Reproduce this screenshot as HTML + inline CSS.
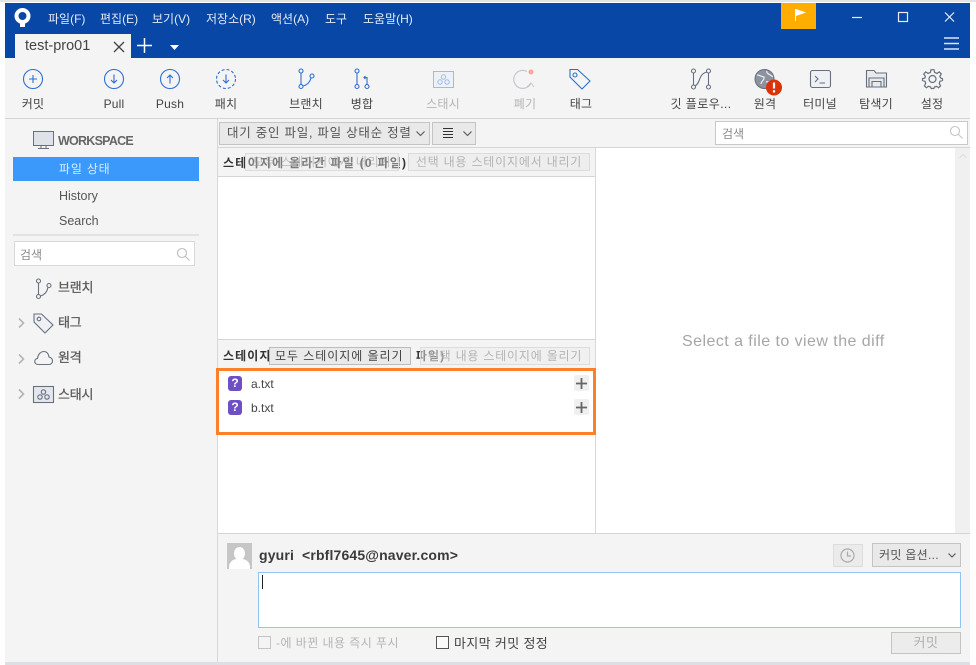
<!DOCTYPE html>
<html><head><meta charset="utf-8">
<style>
html,body{margin:0;padding:0;background:#fff;}
body{width:976px;height:665px;overflow:hidden;position:relative;font-family:"Liberation Sans","Noto Sans CJK KR",sans-serif;font-size:12px;color:#333;}
.a{position:absolute;white-space:nowrap;}
.m{color:#e4ebf6;font-size:12px;top:10px;}
.tl{top:97px;font-size:12px;line-height:14px;color:#444;transform:translateX(-50%);letter-spacing:.2px;}
.d{color:#b5b5b5;}
svg{position:absolute;overflow:visible;fill:none;}
.btn{background:#e9e9e9;border:1px solid #c4c4c4;box-sizing:border-box;}
.dbtn{background:#eee;border:1px solid #dcdcdc;box-sizing:border-box;color:#b4b4b4;font-size:12px;line-height:16px;text-align:center;letter-spacing:.8px;}
.side{font-size:13px;color:#5c5c5c;letter-spacing:-.2px;-webkit-text-stroke:.3px #5c5c5c;}
</style></head><body>
<!-- window -->
<div class="a" style="left:0;top:0;width:976px;height:2px;background:#e4e4e4"></div>
<div class="a" style="left:5px;top:3px;width:965px;height:659px;background:#f4f4f4"></div>
<div class="a" style="left:5px;top:3px;width:965px;height:55px;background:#0847a6"></div>
<div class="a" style="left:5px;top:662px;width:965px;height:3px;background:#dcdfe6"></div>

<!-- logo -->
<svg style="left:14px;top:8px" width="18" height="20"><circle cx="8.500" cy="8" r="6" stroke="#fff" stroke-width="4"/><path d="M6 13 L6 19 L11 19 L11 13Z" fill="#fff"/></svg>

<div class="a m" style="left:48px">파일(F)</div>
<div class="a m" style="left:100px">편집(E)</div>
<div class="a m" style="left:152px">보기(V)</div>
<div class="a m" style="left:206px">저장소(R)</div>
<div class="a m" style="left:271px">액션(A)</div>
<div class="a m" style="left:325px">도구</div>
<div class="a m" style="left:363px">도움말(H)</div>

<!-- tab -->
<div class="a" style="left:15px;top:34px;width:116px;height:24px;background:#f4f4f4"></div>
<div class="a" style="left:25px;top:36px;font-size:14.500px;color:#444;line-height:20px">test-pro01</div>
<svg style="left:113px;top:41px" width="12" height="12" stroke="#444" stroke-width="1.300"><path d="M1 1L11 11M11 1L1 11"/></svg>
<svg style="left:137px;top:38px" width="16" height="16" stroke="#fff" stroke-width="1.500"><path d="M7.500 0V15M0 7.500H15"/></svg>
<svg style="left:170px;top:45px" width="9" height="5"><path d="M0 0H9L4.500 5Z" fill="#fff"/></svg>

<!-- flag, window buttons -->
<div class="a" style="left:781px;top:3px;width:35px;height:26px;background:#ffae00"></div>
<svg style="left:795px;top:8px" width="12" height="14"><path d="M.5 1V13" stroke="#fff"/><path d="M1 1L11 4.500L1 8Z" fill="#fff"/></svg>
<svg style="left:852px;top:12px" width="100" height="14" stroke="#e6edf8" stroke-width="1.200"><path d="M0 5.500H10"/><rect x="46.500" y=".5" width="9" height="9"/><path d="M93 .5L102 9.500M102 .5L93 9.500"/></svg>
<svg style="left:944px;top:37px" width="16" height="13" stroke="#dbe5f5" stroke-width="1.400"><path d="M0 1H15M0 6.500H15M0 12H15"/></svg>

<!-- toolbar icons -->
<svg style="left:23px;top:69px" width="20" height="20" stroke="#2c6fd0" stroke-width="1.100"><circle cx="10" cy="10" r="9.500"/><path d="M6 10H14M10 6V14"/></svg>
<div class="a tl" style="left:33px">커밋</div>
<svg style="left:104px;top:69px" width="20" height="20" stroke="#2c6fd0" stroke-width="1.100"><circle cx="10" cy="10" r="9.500"/><path d="M10 5.500V14M7 11L10 14L13 11"/></svg>
<div class="a tl" style="left:114px">Pull</div>
<svg style="left:160px;top:69px" width="20" height="20" stroke="#2c6fd0" stroke-width="1.100"><circle cx="10" cy="10" r="9.500"/><path d="M10 14.500V6M7 9L10 6L13 9"/></svg>
<div class="a tl" style="left:170px">Push</div>
<svg style="left:216px;top:69px" width="20" height="20" stroke="#2c6fd0" stroke-width="1.100"><circle cx="10" cy="10" r="9.500" stroke-dasharray="3 2"/><path d="M10 5.500V14M7 11L10 14L13 11"/></svg>
<div class="a tl" style="left:226px">패치</div>
<svg style="left:297px;top:68px" width="20" height="22" stroke="#2c6fd0" stroke-width="1.100"><circle cx="4" cy="3" r="2"/><circle cx="4" cy="18.500" r="2"/><circle cx="15" cy="8" r="2"/><path d="M4 5V16.500M6 18C10 17 13 14 14 10"/></svg>
<div class="a tl" style="left:306px">브랜치</div>
<svg style="left:353px;top:68px" width="20" height="22" stroke="#2c6fd0" stroke-width="1.100"><circle cx="4" cy="3" r="2"/><circle cx="4" cy="18.500" r="2"/><circle cx="14" cy="18.500" r="2"/><path d="M4 5V16.500M14 16.500V9.500H11M12.500 8L11 9.500L12.500 11"/></svg>
<div class="a tl" style="left:362px">병합</div>
<svg style="left:433px;top:71px" width="21" height="17" stroke="#9cbbe6" stroke-width="1"><rect x=".5" y=".5" width="20" height="16" fill="#eef2f8"/><circle cx="10.500" cy="6" r="2.200"/><circle cx="7" cy="11" r="2.200"/><circle cx="14" cy="11" r="2.200"/></svg>
<div class="a tl d" style="left:443px">스태시</div>
<svg style="left:513px;top:68px" width="22" height="23" stroke="#c4c8ce" stroke-width="1.200"><path d="M14 3.500A9 9 0 1 0 18 15"/><path d="M14 19L18 15L21 19" stroke-width="1"/><circle cx="18" cy="4" r="2.500" fill="#f9a898" stroke="none"/></svg>
<div class="a tl d" style="left:525px">폐기</div>
<svg style="left:569px;top:68px" width="22" height="22" stroke="#2c6fd0" stroke-width="1.100"><path d="M1 1.500H8.500L21 13L13 21L1 9Z"/><circle cx="6" cy="7" r="2"/></svg>
<div class="a tl" style="left:581px">태그</div>
<svg style="left:690px;top:68px" width="22" height="22" stroke="#66707e" stroke-width="1.100"><circle cx="3.500" cy="3" r="2"/><circle cx="3.500" cy="19" r="2"/><circle cx="18.500" cy="3" r="2"/><circle cx="18.500" cy="19" r="2"/><path d="M3.500 5V17M18.500 5V17M5 18C11 15 8 6 17 4"/></svg>
<div class="a tl" style="left:701px;letter-spacing:.45px">깃 플로우...</div>
<svg style="left:754px;top:69px" width="28" height="27"><circle cx="10.500" cy="10" r="9.500" fill="#8a939e" stroke="#66707e"/><path d="M3 6C6 6 8 8 10 8C11 11 7 12 7 15M13 2C12 5 16 5 19 8M12 13C15 12 17 14 17 17" stroke="#eee" stroke-width="1.200"/><circle cx="20" cy="18.500" r="8" fill="#dd3208"/><path d="M20 13.500V19.500" stroke="#fff" stroke-width="2.200"/><path d="M20 21.200V23.500" stroke="#fff" stroke-width="2.200"/></svg>
<div class="a tl" style="left:765px">원격</div>
<svg style="left:810px;top:70px" width="21" height="19" stroke="#66707e" stroke-width="1.100"><rect x=".5" y=".5" width="20" height="17" rx="2" fill="#eef0f3"/><path d="M5 6L8 9L5 12M9.500 13H15"/></svg>
<div class="a tl" style="left:820px">터미널</div>
<svg style="left:866px;top:70px" width="21" height="18" stroke="#66707e" stroke-width="1.100"><path d="M.5 17V.5H8L10 3H20.500V17Z" fill="#e8eaee"/><path d="M3 17V8H18V17M6 17V11.500H15V17" /></svg>
<div class="a tl" style="left:876px">탐색기</div>
<svg style="left:922px;top:69px" width="21" height="20" stroke="#66707e" stroke-width="1.200"><circle cx="10.500" cy="10" r="3.500"/><path d="M9 .7H12L12.600 3.400L15 4.400L17.300 2.900L19.300 5L17.800 7.300L18.700 9L20.500 9.700V11.500L17.900 12.400L17.300 14.500L18.600 16.900L16.600 18.700L14.400 17.300L12.500 18L11.800 19.500H9.200L8.600 18L6.500 17.300L4.400 18.700L2.400 16.900L3.700 14.500L3 12.400L.5 11.500V9.700L3 9L3.300 7.300L1.700 5L3.700 2.900L6 4.400L8.400 3.400Z"/></svg>
<div class="a tl" style="left:932px">설정</div>

<div class="a" style="left:5px;top:118px;width:965px;height:1px;background:#d5d5d5"></div>

<!-- sidebar -->
<div class="a" style="left:217px;top:119px;width:1px;height:543px;background:#d8d8d8"></div>
<svg style="left:33px;top:131px" width="21" height="19"><rect x=".5" y=".5" width="20" height="14" fill="#dfe3e9" stroke="#66707e"/><path d="M5 17.500H16M8 15V17M13 15V17" stroke="#66707e"/></svg>
<div class="a" style="left:58px;top:134px;font-size:12.500px;color:#666;font-weight:bold;letter-spacing:-.75px">WORKSPACE</div>
<div class="a" style="left:13px;top:157px;width:186px;height:24px;background:#3b99fc"></div>
<div class="a" style="left:59px;top:160px;color:#d8eaff;font-size:12px;letter-spacing:.8px">파일 상태</div>
<div class="a" style="left:59px;top:189px;color:#555;font-size:12.500px">History</div>
<div class="a" style="left:59px;top:214px;color:#555;font-size:12.500px">Search</div>
<div class="a" style="left:13px;top:234px;width:186px;height:2px;background:#e2e2e2"></div>
<div class="a" style="left:14px;top:241px;width:181px;height:25px;background:#fff;border:1px solid #d9d9d9;box-sizing:border-box"></div>
<div class="a" style="left:20px;top:246px;color:#8a8a8a;font-size:12px">검색</div>
<svg style="left:177px;top:248px" width="13" height="13" stroke="#bdbdbd" stroke-width="1.100"><circle cx="5" cy="5" r="4.500"/><path d="M8.500 8.500L12.500 12.500"/></svg>

<svg style="left:35px;top:278px" width="17" height="22" stroke="#66707e" stroke-width="1.100"><circle cx="3.500" cy="3" r="2"/><circle cx="3.500" cy="18.500" r="2"/><circle cx="14" cy="7.500" r="2"/><path d="M3.500 5V16.500M5.500 18C9 17 12 14 13 9.500"/></svg>
<div class="a side" style="left:58px;top:277px">브랜치</div>
<svg style="left:33px;top:313px" width="21" height="21" stroke="#66707e" stroke-width="1.100"><path d="M1 1H8.500L20 12L12 20L1 9Z" fill="#eef0f3"/><circle cx="6" cy="6" r="1.800"/></svg>
<div class="a side" style="left:58px;top:312px">태그</div>
<svg style="left:34px;top:351px" width="19" height="14" stroke="#66707e" stroke-width="1.100"><path d="M4 13.500C1.500 13.500 .5 11.500 .8 10C1 8.500 2.500 7.500 3.500 7.500C4 3 7 .5 10 .5C13 .5 14.500 3 15 6C17 6.500 18.500 8 18.500 10C18.500 12 17 13.500 15 13.500Z"/></svg>
<div class="a side" style="left:58px;top:347px">원격</div>
<svg style="left:33px;top:386px" width="21" height="17" stroke="#66707e" stroke-width="1.100"><rect x=".5" y=".5" width="20" height="16" fill="#e4e7ec"/><circle cx="10.500" cy="6" r="2.200"/><circle cx="7" cy="11" r="2.200"/><circle cx="14" cy="11" r="2.200"/></svg>
<div class="a side" style="left:58px;top:384px">스태시</div>
<svg style="left:18px;top:318px" width="7" height="90" stroke="#b5b5b5" stroke-width="1.600"><path d="M1 .5L5.500 5L1 9.500M1 36.500L5.500 41L1 45.500M1 71.500L5.500 76L1 80.500"/></svg>

<!-- filter bar -->
<div class="a btn" style="left:219px;top:122px;width:211px;height:23px;font-size:12.500px;line-height:21px;padding-left:7px;color:#555;letter-spacing:.75px">대기 중인 파일, 파일 상태순 정렬</div>
<svg style="left:416px;top:131px" width="9" height="5" stroke="#555" stroke-width="1.100"><path d="M.5 .5L4.500 4.500L8.500 .5"/></svg>
<div class="a btn" style="left:432px;top:122px;width:44px;height:23px"></div>
<svg style="left:443px;top:128px" width="10" height="10" stroke="#333"><path d="M0 .5H10M0 3.500H10M0 6.500H10M0 9.500H10"/></svg>
<svg style="left:463px;top:131px" width="9" height="5" stroke="#555" stroke-width="1.100"><path d="M.5 .5L4.500 4.500L8.500 .5"/></svg>
<div class="a" style="left:715px;top:121px;width:253px;height:24px;background:#fff;border:1px solid #c9c9c9;box-sizing:border-box"></div>
<div class="a" style="left:722px;top:125px;color:#8a8a8a;font-size:12px">검색</div>
<svg style="left:950px;top:126px" width="13" height="13" stroke="#c4c4c4" stroke-width="1.100"><circle cx="5" cy="5" r="4.500"/><path d="M8.500 8.500L12.500 12.500"/></svg>
<div class="a" style="left:218px;top:147px;width:752px;height:1px;background:#d5d5d5"></div>

<!-- staged pane -->
<div class="a" style="left:218px;top:148px;width:377px;height:385px;background:#fff"></div>
<div class="a" style="left:218px;top:148px;width:377px;height:28px;background:#f4f4f4;border-bottom:1px solid #d5d5d5;box-sizing:content-box"></div>
<div class="a" style="left:595px;top:148px;width:1px;height:385px;background:#d8d8d8"></div>
<div class="a" style="left:223px;top:154px;font-size:12px;font-weight:bold;color:#333;letter-spacing:1.250px">스테이지에 올라간 파일 (0 파일)</div>
<div class="a dbtn" style="left:245px;top:153px;width:154px;height:18px;background:rgba(236,236,236,.4);color:rgba(150,150,150,.55);">모두 스테이지에서 내리기</div>
<div class="a dbtn" style="left:408px;top:153px;width:182px;height:18px">선택 내용 스테이지에서 내리기</div>

<!-- unstaged pane -->
<div class="a" style="left:218px;top:339px;width:377px;height:29px;background:#f4f4f4;border-top:1px solid #d5d5d5;box-sizing:border-box"></div>
<div class="a" style="left:223px;top:347px;font-size:12px;font-weight:bold;color:#333;letter-spacing:1.100px">스테이지에 올라가지 않은 파일 (2 파일)</div>
<div class="a dbtn" style="left:420px;top:347px;width:170px;height:18px;background:rgba(236,236,236,.5)">선택 내용 스테이지에 올리기</div>
<div class="a btn" style="left:269px;top:347px;width:142px;height:18px;font-size:12px;line-height:16px;padding-left:5px;letter-spacing:.95px;color:#444;background:#eaeaea;border-color:#bcbcbc">모두 스테이지에 올리기</div>

<!-- file list -->
<div class="a" style="left:216px;top:368px;width:380px;height:67px;border:3px solid #fb8128;box-sizing:border-box"></div>
<div class="a" style="left:228px;top:376px;width:14px;height:15px;background:#6e4fc5;border-radius:3px;color:#fff;font-weight:bold;font-size:12px;line-height:15px;text-align:center">?</div>
<div class="a" style="left:251px;top:377px;font-size:12px;color:#444">a.txt</div>
<div class="a" style="left:574px;top:375px;width:15px;height:16px;background:#f0f0f0;border-radius:2px"></div>
<svg style="left:576px;top:378px" width="11" height="11" stroke="#666" stroke-width="1.800"><path d="M5.500 0V11M0 5.500H11"/></svg>
<div class="a" style="left:228px;top:400px;width:14px;height:15px;background:#6e4fc5;border-radius:3px;color:#fff;font-weight:bold;font-size:12px;line-height:15px;text-align:center">?</div>
<div class="a" style="left:251px;top:401px;font-size:12px;color:#444">b.txt</div>
<div class="a" style="left:574px;top:399px;width:15px;height:16px;background:#f0f0f0;border-radius:2px"></div>
<svg style="left:576px;top:402px" width="11" height="11" stroke="#666" stroke-width="1.800"><path d="M5.500 0V11M0 5.500H11"/></svg>

<!-- diff pane -->
<div class="a" style="left:596px;top:148px;width:359px;height:385px;background:#fff"></div>
<div class="a" style="left:955px;top:148px;width:15px;height:385px;background:#f0f0f0"></div>
<svg style="left:959px;top:154px" width="8" height="5" stroke="#dcdcdc"><path d="M.5 4L4 .5L7.500 4"/></svg>
<div class="a" style="left:682px;top:333px;font-size:16px;color:#a6a6a6;line-height:18px;letter-spacing:.45px">Select a file to view the diff</div>

<!-- commit area -->
<div class="a" style="left:218px;top:533px;width:752px;height:1px;background:#d5d5d5"></div>
<div class="a" style="left:227px;top:543px;width:25px;height:26px;background:#c6c6c6;overflow:hidden"><div class="a" style="left:7px;top:4px;width:11px;height:13px;background:#fff;border-radius:50%"></div><div class="a" style="left:2px;top:16px;width:21px;height:14px;background:#fff;border-radius:8px 8px 0 0"></div></div>
<div class="a" style="left:259px;top:547px;font-size:14px;font-weight:bold;color:#3a3a3a;letter-spacing:.15px">gyuri &nbsp;&lt;rbfl7645@naver.com&gt;</div>
<div class="a" style="left:833px;top:544px;width:30px;height:23px;background:#ebebeb;border:1px solid #ddd;box-sizing:border-box"></div>
<svg style="left:840px;top:548px" width="15" height="15" stroke="#aaa" stroke-width="1.200"><circle cx="7.500" cy="7.500" r="6.500"/><path d="M7.500 3.500V8H11"/></svg>
<div class="a btn" style="left:872px;top:543px;width:89px;height:24px;font-size:12px;line-height:22px;padding-left:6px;color:#555;letter-spacing:.3px">커밋 옵션...</div>
<svg style="left:948px;top:553px" width="8" height="5" stroke="#555" stroke-width="1.100"><path d="M.5 .5L4 4L7.500 .5"/></svg>
<div class="a" style="left:258px;top:572px;width:703px;height:56px;background:#fff;border:1px solid #90c4f5;box-sizing:border-box"></div>
<div class="a" style="left:262px;top:575px;width:1px;height:14px;background:#222"></div>
<div class="a" style="left:258px;top:636px;width:13px;height:13px;background:#f4f4f4;border:1px solid #c4c4c4;box-sizing:border-box"></div>
<div class="a d" style="left:276px;top:634px;font-size:12px;letter-spacing:.45px">-에 바뀐 내용 즉시 푸시</div>
<div class="a" style="left:436px;top:636px;width:13px;height:13px;background:#fbfbfb;border:1px solid #555;box-sizing:border-box"></div>
<div class="a" style="left:454px;top:633px;font-size:13px;color:#444;letter-spacing:.35px">마지막 커밋 정정</div>
<div class="a" style="left:891px;top:632px;width:70px;height:22px;background:#ececec;border:1px solid #c4c4c4;box-sizing:border-box;color:#b0b0b0;font-size:13px;line-height:20px;text-align:center;letter-spacing:.5px">커밋</div>
</body></html>
